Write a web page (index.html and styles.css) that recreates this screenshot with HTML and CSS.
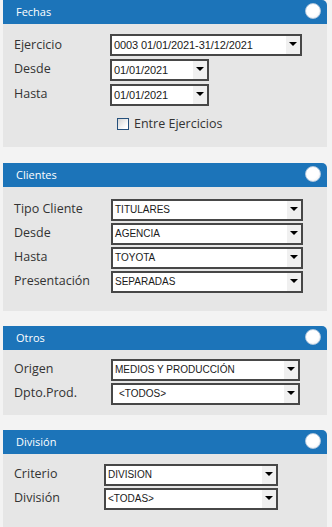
FILE: index.html
```html
<!DOCTYPE html>
<html lang="es">
<head>
<meta charset="utf-8">
<title>Filtros</title>
<link rel="stylesheet" href="styles.css">
</head>
<body>
<div class="page">
  <section class="panel panel-fechas">
    <header class="panel-head"><span class="panel-title">Fechas</span><span class="knob"></span></header>
    <div class="panel-body">
      <div class="form form-fechas">
        <span class="label label-first">Ejercicio</span>
        <div class="select sel-wide sel-date"><span class="sel-text">0003 01/01/2021-31/12/2021</span><span class="sel-btn"></span></div>
        <span class="label">Desde</span>
        <div class="select sel-short sel-date"><span class="sel-text">01/01/2021</span><span class="sel-btn"></span></div>
        <span class="label">Hasta</span>
        <div class="select sel-short sel-date"><span class="sel-text">01/01/2021</span><span class="sel-btn"></span></div>
      </div>
      <label class="check-row"><span class="checkbox"></span><span class="check-text">Entre Ejercicios</span></label>
    </div>
  </section>

  <section class="panel panel-clientes">
    <header class="panel-head"><span class="panel-title">Clientes</span><span class="knob"></span></header>
    <div class="panel-body">
      <div class="form">
        <span class="label">Tipo Cliente</span>
        <div class="select sel-wide"><span class="sel-text">TITULARES</span><span class="sel-btn"></span></div>
        <span class="label">Desde</span>
        <div class="select sel-wide"><span class="sel-text">AGENCIA</span><span class="sel-btn"></span></div>
        <span class="label">Hasta</span>
        <div class="select sel-wide"><span class="sel-text">TOYOTA</span><span class="sel-btn"></span></div>
        <span class="label">Presentación</span>
        <div class="select sel-wide"><span class="sel-text">SEPARADAS</span><span class="sel-btn"></span></div>
      </div>
    </div>
  </section>

  <section class="panel panel-otros">
    <header class="panel-head"><span class="panel-title">Otros</span><span class="knob"></span></header>
    <div class="panel-body">
      <div class="form">
        <span class="label">Origen</span>
        <div class="select sel-mid"><span class="sel-text">MEDIOS Y PRODUCCIÓN</span><span class="sel-btn"></span></div>
        <span class="label">Dpto.Prod.</span>
        <div class="select sel-mid"><span class="sel-text sel-indent">&lt;TODOS&gt;</span><span class="sel-btn"></span></div>
      </div>
    </div>
  </section>

  <section class="panel panel-division">
    <header class="panel-head"><span class="panel-title">División</span><span class="knob"></span></header>
    <div class="panel-body">
      <div class="form form-division">
        <span class="label">Criterio</span>
        <div class="select sel-div"><span class="sel-text">DIVISION</span><span class="sel-btn"></span></div>
        <span class="label">División</span>
        <div class="select sel-div"><span class="sel-text">&lt;TODAS&gt;</span><span class="sel-btn"></span></div>
      </div>
    </div>
  </section>
</div>
</body>
</html>
```

FILE: styles.css
```css
html, body {
  margin: 0;
  padding: 0;
  background: #f3f3f3;
}

.page {
  display: flex;
  flex-direction: column;
  padding: 0 5px 0 3px;
  height: 527px;
  overflow: hidden;
}

.panel {
  display: flex;
  flex-direction: column;
  flex-shrink: 0;
}

.panel-clientes { margin-top: 16px; }
.panel-otros { margin-top: 15px; }
.panel-division { margin-top: 15px; flex: 1; }

.panel-head {
  height: 24px;
  background: #1c74b9;
  border-top-right-radius: 5px;
  display: flex;
  align-items: center;
  justify-content: space-between;
  padding: 0 6px 0 13px;
}

.panel-title {
  font-family: "Open Sans", "Noto Sans", sans-serif;
  font-size: 11px;
  line-height: 24px;
  color: #ffffff;
}

.knob {
  width: 14px;
  height: 14px;
  border-radius: 50%;
  border: 1px solid #b4c9de;
  background: radial-gradient(circle at 40% 38%, #ffffff 55%, #e4e9ef 100%);
  margin-top: -2px;
}

.panel-body {
  background: #e6e6e6;
  padding: 10px 0 14px 11px;
}

.panel-clientes .panel-body { padding: 12px 0 18px 11px; }
.panel-otros .panel-body { padding: 9px 0 10px 11px; }
.panel-division .panel-body { padding: 10px 0 0 11px; flex: 1; }

.form {
  display: grid;
  grid-template-columns: 97px auto;
  row-gap: 2px;
  align-items: start;
}

.form-fechas { row-gap: 3px; grid-template-columns: 96px auto; }
.form-division { grid-template-columns: 90px auto; }

.label {
  font-family: "Open Sans", "Noto Sans", sans-serif;
  font-size: 12.5px;
  line-height: 18px;
  color: #333333;
  padding-top: 1px;
}

.label-first { padding-top: 2px; }

.select {
  height: 22px;
  box-sizing: border-box;
  border: 2px solid #474747;
  background: #ffffff;
  display: flex;
  align-items: stretch;
}

.sel-wide { width: 192px; }
.sel-short { width: 99px; }
.sel-mid { width: 189px; }
.sel-div { width: 174px; }

.sel-text {
  flex: 1;
  font-family: "Liberation Sans", Arial, sans-serif;
  font-size: 10px;
  line-height: 18px;
  color: #1a1a1a;
  padding-left: 2px;
  white-space: nowrap;
  overflow: hidden;
}

.sel-date .sel-text { font-size: 11px; letter-spacing: -0.1px; }
.sel-indent { padding-left: 6px; }

.sel-btn {
  width: 14px;
  background: #f0f0f0;
  display: flex;
  align-items: center;
  justify-content: center;
}

.sel-btn::after {
  content: "";
  width: 0;
  height: 0;
  border-left: 4px solid transparent;
  border-right: 4px solid transparent;
  border-top: 4px solid #000000;
  margin-top: -2px;
}

.check-row {
  display: flex;
  align-items: center;
  height: 18px;
  margin: 9px 0 0 103px;
}

.checkbox {
  width: 12px;
  height: 12px;
  box-sizing: border-box;
  border: 1px solid #25507c;
  background: linear-gradient(135deg, #d4d4d4 0%, #ffffff 80%);
}

.check-text {
  font-family: "Open Sans", "Noto Sans", sans-serif;
  font-size: 12.5px;
  line-height: 18px;
  color: #333333;
  margin-left: 5px;
}
```
